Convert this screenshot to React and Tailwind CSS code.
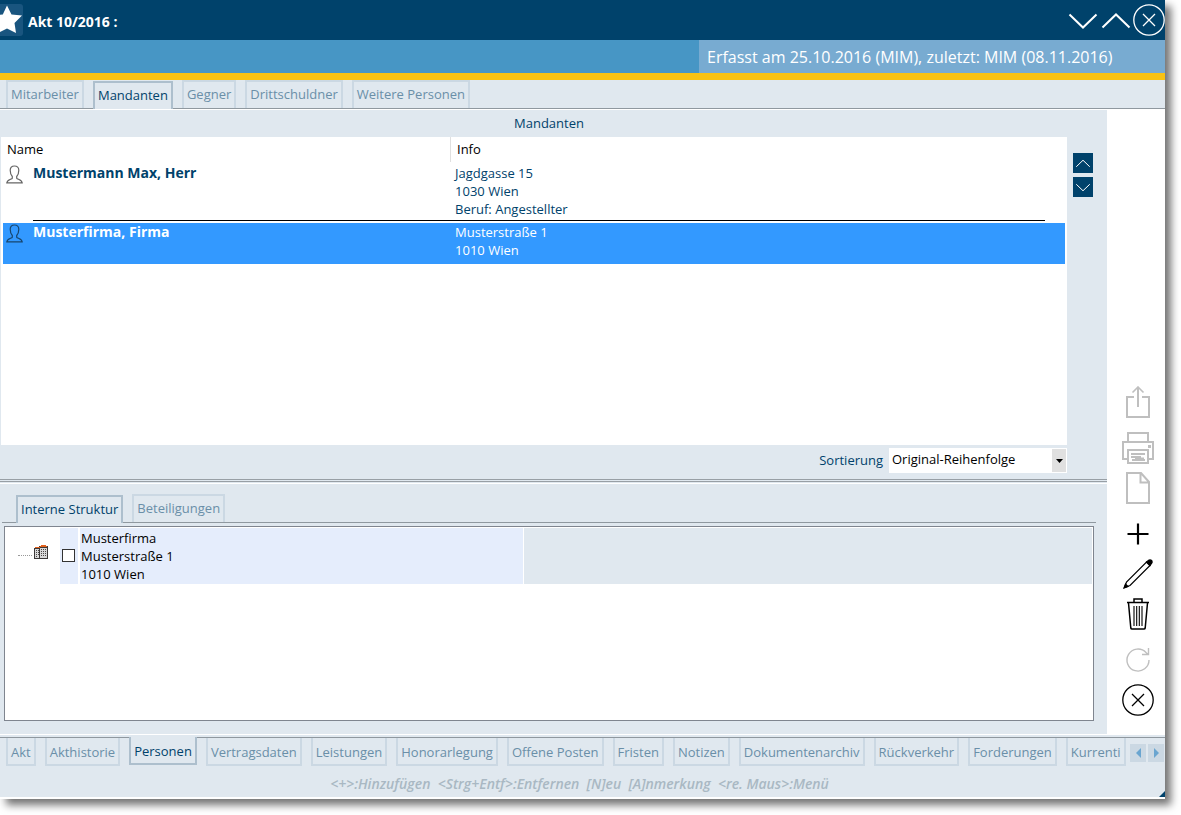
import { useState } from 'react';

const MAIN_TABS = ['Mitarbeiter', 'Mandanten', 'Gegner', 'Drittschuldner', 'Weitere Personen'];
const DETAIL_TABS = ['Interne Struktur', 'Beteiligungen'];
const BOTTOM_TABS = [
  'Akt',
  'Akthistorie',
  'Personen',
  'Vertragsdaten',
  'Leistungen',
  'Honorarlegung',
  'Offene Posten',
  'Fristen',
  'Notizen',
  'Dokumentenarchiv',
  'Rückverkehr',
  'Forderungen',
  'Kurrenti',
];

const CLIENTS = [
  { id: 1, name: 'Mustermann Max, Herr', info: ['Jagdgasse 15', '1030 Wien', 'Beruf: Angestellter'] },
  { id: 2, name: 'Musterfirma, Firma', info: ['Musterstraße 1', '1010 Wien'] },
];

const Chevron = ({ up, className }) => (
  <svg viewBox="0 0 32 32" className={className} fill="none" stroke="currentColor">
    <path d={up ? 'M2.500 23.500 16 10.500 29.500 23.500' : 'M2.500 10.500 16 23.500 29.500 10.500'} />
  </svg>
);

const CircleX = () => (
  <svg viewBox="0 0 32 32" className="size-8" fill="none" stroke="currentColor" strokeWidth="1.3">
    <circle cx="16" cy="16" r="15.2" />
    <path d="M10 10 22 22M22 10 10 22" />
  </svg>
);

const PersonIcon = () => (
  <svg viewBox="0 0 17 19" className="h-[19px] w-[17px]" fill="none" stroke="currentColor" strokeWidth="1.2">
    <path d="M6.300 11.500C4.800 9.800 4.200 7.500 4.200 5.200 4.200 2.500 5.800 1 8.500 1s4.300 1.500 4.300 4.200c0 2.300-.6 4.600-2.100 6.300v1.700c.5 1.200 5.200 1.400 5.500 4.700H.8c.3-3.300 5-3.500 5.500-4.700z" />
  </svg>
);

const BuildingIcon = () => (
  <svg viewBox="0 0 14 14" className="size-3.5" shapeRendering="crispEdges">
    <path d="M0 3h6v11H0zM5 1h9v13H5z" fill="#3c3838" />
    <path d="M1 4h4v9H1zM6 3h7v10H6z" fill="#d8d8d8" />
    <path d="M1 2h5v1H1zM7 0h5v1H7zM6 1h7v1H6z" fill="#e0601c" />
    <path d="M2 5h1v1H2zM4 5h1v1H4zM2 7h1v1H2zM4 7h1v1H4zM2 9h1v1H2zM4 9h1v1H4zM2 11h1v1H2zM7 4h1v1H7zM9 4h1v1H9zM11 4h1v1h-1zM7 6h1v1H7zM9 6h1v1H9zM11 6h1v1h-1zM7 8h1v1H7zM9 8h1v1H9zM11 8h1v1h-1zM7 10h1v1H7zM9 10h1v1H9zM11 10h1v1h-1z" fill="#4a4646" />
  </svg>
);

// Toolbar on the right, grouped the way the gaps separate them
const TOOLS = [
  [
    {
      label: 'Exportieren',
      disabled: true,
      icon: (
        <g strokeWidth="2">
          <path d="M12 11H5v20h22V11h-7M16 21V1" />
          <path d="M10.500 6.500 16 1 21.500 6.500" strokeWidth="1.600" />
        </g>
      ),
    },
  ],
  [
    {
      label: 'Drucken',
      disabled: true,
      icon: (
        <g strokeWidth="2">
          <path d="M6 10V1h20v9M6 27H1V10h30v17h-5" />
          <path d="M6 18h20v13H6z" />
          <path d="M9 22h14M9 25h10M10 28h13M13 26.500h9" strokeWidth="1.800" />
          <path d="M26 13h3v3h-3z" fill="currentColor" stroke="none" />
        </g>
      ),
    },
    {
      label: 'Dokument',
      disabled: true,
      icon: <path d="M5 1h14l8 9v21H5zM18.500 1v9.500H27" strokeWidth="2" />,
    },
  ],
  [
    { label: 'Hinzufügen', icon: <path d="M16 5.500v21M5.500 16h21" strokeWidth="2.200" /> },
    {
      label: 'Bearbeiten',
      icon: (
        <g strokeWidth="1.200">
          <path d="M2.500 29.500 4.500 24 24.500 4 28 7.500 8 27.500z" />
          <path d="M2 30 3.500 26l2.500 2.500zM24.500 4 27 2q2.500-.5 3 1t-.5 2.500L28 7.500z" fill="currentColor" />
        </g>
      ),
    },
    {
      label: 'Löschen',
      icon: (
        <g strokeWidth="1.500">
          <path d="M5 4.500h22M12 4V1h8v3M6.500 5l2.300 25q.2 1 1.200 1h12q1 0 1.200-1l2.300-25" />
          <path d="M12 8v20M14.700 8v20M17.300 8v20M20 8v20" strokeWidth="1.100" />
        </g>
      ),
    },
  ],
  [
    {
      label: 'Aktualisieren',
      disabled: true,
      icon: <path d="M27 16a11 11 0 1 1-3-7.500l2 2M26.500 4v6.500H20" strokeWidth="1.400" />,
    },
    {
      label: 'Schließen',
      icon: (
        <g strokeWidth="1.300">
          <circle cx="16" cy="16" r="15.200" />
          <path d="M10 10 22 22M22 10 10 22" />
        </g>
      ),
    },
  ],
];

// side="top": tabs stand on the line, side="bottom": tabs hang below it
const Tab = ({ label, active, side = 'top', onClick }) => {
  const color = active ? 'border-[#adbfcd] bg-[#e0e8ef] text-[#00426b]' : 'border-[#cbd8e3] text-[#6a8fa8]';
  const edge = side === 'top'
    ? `h-7 border-t-2 pb-0.5 ${active ? 'mt-px' : 'mb-px'}`
    : `h-7 border-b-2 pt-0.5 ${active ? 'mb-px' : 'mt-px'}`;
  return (
    <button
      type="button"
      role="tab"
      aria-selected={active}
      onClick={onClick}
      className={`shrink-0 whitespace-nowrap border-x-2 px-[3px] ${edge} ${color}`}
    >
      {label}
    </button>
  );
};

const App = () => {
  const [mainTab, setMainTab] = useState('Mandanten');
  const [detailTab, setDetailTab] = useState('Interne Struktur');
  const [bottomTab, setBottomTab] = useState('Personen');
  const [selected, setSelected] = useState(2);

  return (
    <div className="flex min-h-screen overflow-hidden bg-white pr-4 pb-4 font-['Open_Sans',sans-serif] text-[13px] leading-[18px] text-black">
      <div className="flex min-w-0 flex-1 flex-col border-b-2 border-white bg-[#e0e8ef] shadow-[6px_6px_8px_rgba(0,0,0,0.55)]">
        {/* Title bar */}
        <header className="flex h-10 items-center bg-[#00426b] text-white">
          <svg viewBox="0 0 23 32" className="h-8 w-[23px]">
            <path d="M0 0h20q3 0 3 3v26q0 3-3 3H0z" fill="#19557f" />
            <path d="M7 1.500 11.500 10.500 22 11.500 14.500 19 16 29 7 24.500-2 29-.5 19-8 11.500 2.800 10.500z" fill="#fff" />
          </svg>
          <h1 className="flex-1 pt-1 pl-[5px] text-sm leading-[18px] font-bold">Akt 10/2016 :</h1>
          <div className="flex gap-px">
            <button type="button" aria-label="Nächster Akt"><Chevron className="size-8 stroke-2" /></button>
            <button type="button" aria-label="Voriger Akt"><Chevron up className="size-8 stroke-2" /></button>
            <button type="button" aria-label="Fenster schließen"><CircleX /></button>
          </div>
        </header>
        <div className="flex h-10 justify-end border-b-[7px] border-[#f8c213] bg-[#4796c5]">
          <p className="w-2/5 bg-[#78abd1] pl-2 text-base leading-[34px] whitespace-nowrap text-white">
            Erfasst am 25.10.2016 (MIM), zuletzt: MIM (08.11.2016)
          </p>
        </div>

        {/* Main tabs */}
        <div role="tablist" className="flex gap-[9px] border-b border-white bg-[linear-gradient(#8f989f,#8f989f)] bg-[length:100%_1px] bg-bottom bg-no-repeat pl-1.5 [background-origin:padding-box]">
          {MAIN_TABS.map((label) => (
            <Tab key={label} label={label} active={label === mainTab} onClick={() => setMainTab(label)} />
          ))}
        </div>

        <div className="flex flex-1 border-b border-white">
          <main className="flex min-w-0 flex-1 flex-col">
            <h2 className="pt-1 pb-[5px] pl-[514px] text-[#00426b]">Mandanten</h2>

            {/* Client list */}
            <div className="flex pl-px">
              <div className="h-[308px] flex-1 bg-white px-0.5">
                <table className="w-full table-fixed border-collapse">
                  <colgroup>
                    <col className="w-[30px]" />
                    <col className="w-[417px]" />
                    <col />
                    <col className="w-5" />
                  </colgroup>
                  <thead>
                    <tr className="text-left align-top">
                      <th colSpan="2" className="pt-[3px] pl-1 font-normal">Name</th>
                      <th colSpan="2" className="p-0 pb-0.5 font-normal">
                        <div className="border-l border-[#e0e0e0] pt-[3px] pb-1 pl-1.5">Info</div>
                      </th>
                    </tr>
                  </thead>
                  {CLIENTS.map((client, index) => {
                    const isSelected = client.id === selected;
                    return (
                      <tbody key={client.id}>
                        {index > 0 && (
                          <tr>
                            <td />
                            <td colSpan="2" className="py-0.5"><div className="h-px bg-black" /></td>
                            <td />
                          </tr>
                        )}
                        <tr
                          onClick={() => setSelected(client.id)}
                          className={`align-top ${isSelected ? 'bg-[#3399ff] text-white' : 'text-[#00426b]'}`}
                        >
                          <td className={`pt-px pl-[3px] ${isSelected ? 'text-[#17466f]' : 'text-[#666666]'}`}><PersonIcon /></td>
                          <td className="text-sm leading-[18px] font-bold">{client.name}</td>
                          <td className={`pl-[5px] ${isSelected ? 'pb-[5px]' : ''}`}>
                            {client.info.map((line) => <div key={line}>{line}</div>)}
                          </td>
                          <td />
                        </tr>
                      </tbody>
                    );
                  })}
                </table>
              </div>
              <div className="flex w-10 flex-col gap-1 pt-4 pl-1.5">
                <button type="button" aria-label="Nach oben" className="flex size-5 items-center justify-center bg-[#00426b] text-white">
                  <Chevron up className="size-4 stroke-2" />
                </button>
                <button type="button" aria-label="Nach unten" className="flex size-5 items-center justify-center bg-[#00426b] text-white">
                  <Chevron className="size-4 stroke-2" />
                </button>
              </div>
            </div>

            <div className="flex items-center justify-end gap-1.5 pt-[3px] pr-10 pb-1.5">
              <label htmlFor="sort" className="pb-0.5 text-[#00426b]">Sortierung</label>
              <div className="relative">
                <select id="sort" className="block h-[25px] w-[178px] appearance-none rounded-none bg-white pr-4 pb-1 pl-[3px]">
                  <option>Original-Reihenfolge</option>
                  <option>Name</option>
                </select>
                <span className="pointer-events-none absolute inset-y-px right-px flex w-3.5 items-center justify-center bg-[#e0e0e0]">
                  <svg viewBox="0 0 7 4" className="h-1 w-[7px]"><path d="M0 0h7L3.500 4z" /></svg>
                </span>
              </div>
            </div>

            {/* Splitter */}
            <div className="h-[3px] border-y border-[#989fa5]" />
            <div className="mt-px h-px bg-white" />

            {/* Detail tabs */}
            <div role="tablist" className="mt-2.5 mr-[11px] ml-0.5 flex gap-[9px] bg-[linear-gradient(#8f989f,#8f989f)] bg-[length:100%_1px] bg-bottom bg-no-repeat pl-3.5">
              {DETAIL_TABS.map((label) => (
                <Tab key={label} label={label} active={label === detailTab} onClick={() => setDetailTab(label)} />
              ))}
            </div>
            <div className="mt-[3px] mr-[13px] mb-[13px] ml-1 flex-1 border border-[#7f858f] bg-white p-px">
              <div className="flex">
                <div className="flex w-[54px] items-center pb-0.5 pl-3">
                  <span className="w-3.5 border-t border-dotted border-[#999999]" />
                  <span className="ml-0.5 pb-1.5"><BuildingIcon /></span>
                </div>
                <div className="flex w-[18px] items-center bg-[#e5edfc] pb-0.5 pl-0.5">
                  <input
                    type="checkbox"
                    aria-label="Musterfirma"
                    className="size-[13px] appearance-none border border-[#333333] bg-white checked:bg-[#00426b]"
                  />
                </div>
                <div className="ml-0.5 w-[443px] bg-[#e5edfc] py-px pl-px">
                  <div>Musterfirma</div>
                  <div>Musterstraße 1</div>
                  <div>1010 Wien</div>
                </div>
                <div className="ml-px flex-1 bg-[#e0e8ef]" />
              </div>
            </div>
          </main>

          {/* Toolbar */}
          <aside className="flex w-[58px] flex-col items-center justify-end gap-3.5 bg-white pr-1 pb-[18px] pl-2">
            {TOOLS.map((group) => (
              <div key={group[0].label} className="flex flex-col gap-2">
                {group.map(({ label, disabled, icon }) => (
                  <button key={label} type="button" aria-label={label} disabled={disabled} className="text-black disabled:text-[#bfbfbf]">
                    <svg viewBox="0 0 32 32" className="size-8" fill="none" stroke="currentColor">{icon}</svg>
                  </button>
                ))}
              </div>
            ))}
          </aside>
        </div>

        {/* Bottom tabs */}
        <div className="mt-0.5 flex bg-[linear-gradient(#8f989f,#8f989f)] bg-[length:100%_1px] bg-top bg-no-repeat pr-px">
          <div role="tablist" className="flex min-w-0 flex-1 gap-[9px] overflow-hidden pl-1.5">
            {BOTTOM_TABS.map((label) => (
              <Tab key={label} side="bottom" label={label} active={label === bottomTab} onClick={() => setBottomTab(label)} />
            ))}
          </div>
          <div className="flex gap-0.5 pt-[7px] pl-1">
            <button type="button" aria-label="Tabs zurück" className="flex h-[18px] w-4 items-center justify-center bg-[#cbd8e3] text-[#6aa5d0]">
              <svg viewBox="0 0 5 10" className="h-2.5 w-[5px]" fill="currentColor"><path d="M5 0v10L0 5z" /></svg>
            </button>
            <button type="button" aria-label="Tabs weiter" className="flex h-[18px] w-4 items-center justify-center bg-[#cbd8e3] text-[#6aa5d0]">
              <svg viewBox="0 0 5 10" className="h-2.5 w-[5px]" fill="currentColor"><path d="M0 0v10l5-5z" /></svg>
            </button>
          </div>
        </div>

        {/* Shortcut hints */}
        <footer className="relative pt-[9px] pr-1.5 pb-1 text-center text-sm leading-[18px] font-semibold whitespace-pre text-[#a9b8c3] italic">
          {'<+>:Hinzufügen  <Strg+Entf>:Entfernen  [N]eu  [A]nmerkung  <re. Maus>:Menü'}
          <svg viewBox="0 0 6 6" className="absolute right-0 bottom-0 size-1.5"><path d="M6 0v6H0z" fill="#00426b" /></svg>
        </footer>
      </div>
    </div>
  );
};

export default App;
